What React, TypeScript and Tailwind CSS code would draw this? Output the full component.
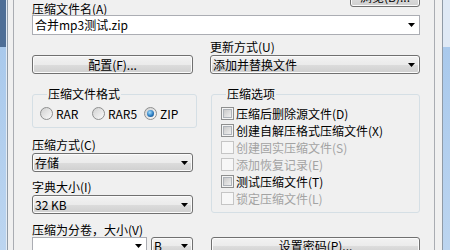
const font = "font-['Noto_Sans_CJK_SC',sans-serif]";

const win7Btn =
  "rounded-[3px] border border-[#707070] bg-[linear-gradient(#f2f2f2_0%,#ebebeb_50%,#dddddd_50%,#cfcfcf_100%)] shadow-[inset_0_0_0_1px_#fbfbfb]";

function Arrow() {
  return (
    <svg width="7" height="4" viewBox="0 0 7 4" className="shrink-0">
      <path d="M0 0h7L3.5 4z" fill="#000" />
    </svg>
  );
}

function Button({ label, className = "" }: { label: string; className?: string }) {
  return (
    <div className={`${win7Btn} flex shrink-0 items-center justify-center leading-[14px] ${className}`}>
      {label}
    </div>
  );
}

function Combo({ text, editable, className = "" }: { text: string; editable?: boolean; className?: string }) {
  const look = editable ? "border border-[#abadb3] bg-white" : win7Btn;
  return (
    <div className={`${look} flex shrink-0 items-center pl-[2px] pr-[4px] ${className}`}>
      <span className="flex-1 leading-[14px]">{text}</span>
      <Arrow />
    </div>
  );
}

function Radio({ label, checked }: { label: string; checked?: boolean }) {
  return (
    <div className="flex w-[52px] items-center gap-[3px]">
      <span className="flex h-[13px] w-[13px] items-center justify-center rounded-full border border-[#8e8f8f] bg-[linear-gradient(135deg,#d0d0d0,#fbfbfb)]">
        {checked && (
          <span className="h-[7px] w-[7px] rounded-full bg-[radial-gradient(circle_at_40%_35%,#a6e0ff_0%,#2b7bc0_55%,#0d3f70_100%)]" />
        )}
      </span>
      <span className="leading-[14px]">{label}</span>
    </div>
  );
}

function Check({ label, disabled }: { label: string; disabled?: boolean }) {
  return (
    <div className="flex h-[17px] items-center gap-[2px]">
      <span
        className={`flex h-[13px] w-[13px] items-center justify-center border ${
          disabled ? "border-[#c5c5c5] bg-[#f7f7f7]" : "border-[#8e8f8f] bg-[#f4f4f4]"
        }`}
      >
        {!disabled && (
          <span className="h-[9px] w-[9px] border border-[#aeb3b9] bg-[linear-gradient(135deg,#c9c9c9,#efefef)]" />
        )}
      </span>
      <span className={`leading-[14px] ${disabled ? "text-[#a3a3a3]" : ""}`}>{label}</span>
    </div>
  );
}

const options = [
  { label: "压缩后删除源文件(D)" },
  { label: "创建自解压格式压缩文件(X)" },
  { label: "创建固实压缩文件(S)", disabled: true },
  { label: "添加恢复记录(E)", disabled: true },
  { label: "测试压缩文件(T)" },
  { label: "锁定压缩文件(L)", disabled: true },
];

export default function App() {
  return (
    <div className={`${font} flex h-[250px] w-[450px] overflow-hidden bg-[#f0f0f0] text-[12px] text-black`}>
      {/* window frame, left */}
      <div className="w-[6px] bg-[linear-gradient(#4e6e96_0,#4e6e96_47px,#a9c9ec_47px,#bcd5f0_100%)]" />
      <div className="w-[1px] bg-[#e3ebf4]" />
      <div className="w-[1px] bg-[#8f9aa6]" />
      <div className="w-[5px]" />
      <div className="w-[1px] bg-[#a9acb2]" />

      {/* tab page */}
      <div className="flex flex-1 flex-col pl-[18px] pr-[14px]">
        <div className="-mt-[13px] flex h-[28px] shrink-0 justify-between">
          <span className="self-end leading-[12px]">压缩文件名(A)</span>
          <Button label="浏览(B)..." className="h-[20px] w-[70px] self-start" />
        </div>
        <Combo text="合并mp3测试.zip" editable className="h-[20px]" />

        <div className="grid shrink-0 grid-cols-[161px_210px] gap-x-[17px]">
          <div className="flex flex-col">
            <Button label="配置(F)..." className="mt-[20px] h-[19px]" />
          </div>
          <div className="flex flex-col">
            <span className="mt-[5px] leading-[14px]">更新方式(U)</span>
            <Combo text="添加并替换文件" className="mt-[1px] h-[19px]" />
          </div>
        </div>

        <div className="grid shrink-0 grid-cols-[161px_210px] gap-x-[17px]">
          <div className="flex flex-col">
            <fieldset className="mt-[13px] shrink-0 rounded-[3px] border border-[#d5dfe5] pb-[7px] pl-[7px] pt-[6px]">
              <legend className="ml-[7px] px-[1px] leading-[14px]">压缩文件格式</legend>
              <div className="flex h-[13px] items-center">
                <Radio label="RAR" />
                <Radio label="RAR5" />
                <Radio label="ZIP" checked />
              </div>
            </fieldset>
            <span className="mt-[10px] shrink-0 leading-[14px]">压缩方式(C)</span>
            <Combo text="存储" className="mt-[1px] h-[19px]" />
            <span className="mt-[8px] shrink-0 leading-[14px]">字典大小(I)</span>
            <Combo text="32 KB" className="mt-[1px] h-[19px]" />
            <span className="mt-[9px] shrink-0 leading-[14px]">压缩为分卷，大小(V)</span>
            <div className="flex shrink-0 gap-[4px]">
              <Combo text="" editable className="h-[18px] w-[115px]" />
              <Combo text="B" className="h-[18px] w-[42px]" />
            </div>
          </div>

          <div className="flex flex-col">
            <fieldset className="ml-[1px] mt-[13px] shrink-0 rounded-[3px] border border-[#d5dfe5] pb-[5px] pl-[9px] pt-[4px]">
              <legend className="ml-[5px] px-[1px] leading-[14px]">压缩选项</legend>
              {options.map((o) => (
                <Check key={o.label} label={o.label} disabled={o.disabled} />
              ))}
            </fieldset>
            <Button label="设置密码(P)..." className="ml-[1px] mt-[24px] h-[18px]" />
          </div>
        </div>
      </div>

      {/* window frame, right */}
      <div className="w-[1px] bg-[#a9acb2]" />
      <div className="w-[7px]" />
      <div className="w-[1px] bg-[#8f9aa6]" />
      <div className="w-[7px] bg-[linear-gradient(#dfe9f5_0,#dfe9f5_47px,#a9c9ec_47px,#bcd5f0_100%)]" />
    </div>
  );
}
